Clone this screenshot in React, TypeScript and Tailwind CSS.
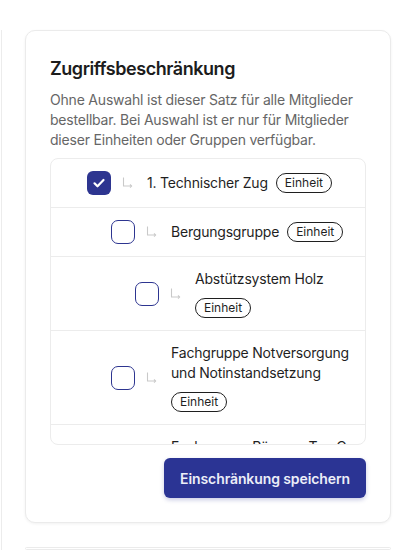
import React from "react";

type Item = { label: string; level: number; checked?: boolean };

const items: Item[] = [
  { label: "1. Technischer Zug", level: 0, checked: true },
  { label: "Bergungsgruppe", level: 1 },
  { label: "Abstützsystem Holz", level: 2 },
  { label: "Fachgruppe Notversorgung und Notinstandsetzung", level: 1 },
  { label: "Fachgruppe Räumen Typ C", level: 1 },
];

function Arrow() {
  return (
    <svg width="16" height="16" viewBox="0 0 16 16" fill="none" className="shrink-0">
      <path d="M4.5 2.5v8.5h8" stroke="#c9c9c9" strokeWidth="1.1" />
      <path d="M11 9.5l1.6 1.5-1.6 1.5" stroke="#c9c9c9" strokeWidth="1.1" />
    </svg>
  );
}

function Checkbox({ checked }: { checked?: boolean }) {
  if (checked) {
    return (
      <div className="w-6 h-6 shrink-0 rounded-[6px] bg-[#2d3590] flex items-center justify-center">
        <svg width="14" height="14" viewBox="0 0 14 14" fill="none">
          <path d="M2.5 7.3l3 3 6-6.3" stroke="#ffffff" strokeWidth="2.2" strokeLinecap="round" strokeLinejoin="round" />
        </svg>
      </div>
    );
  }
  return <div className="w-6 h-6 shrink-0 rounded-[7px] border-[1.5px] border-[#2d3590] bg-white" />;
}

function Row({ item }: { item: Item }) {
  const pad = item.level === 0 ? "pl-9" : item.level === 1 ? "pl-[60px]" : "pl-[84px]";
  return (
    <div className={`flex items-center border-b border-[#ececec] py-3 pr-4 ${pad}`}>
      <Checkbox checked={item.checked} />
      <div className="ml-2 mr-3">
        <Arrow />
      </div>
      <div className="flex flex-wrap items-center gap-x-2 gap-y-[9px] min-w-0">
        <span className="text-[14px] leading-5 tracking-[-0.2px] text-[#1f1f1f] min-w-0">{item.label}</span>
        <span className="text-[12px] leading-4 text-[#1f1f1f] border border-[#1f1f1f] rounded-full px-2 py-px">
          Einheit
        </span>
      </div>
    </div>
  );
}

export default function App() {
  return (
    <div
      className="w-[415px] h-[550px] overflow-hidden bg-white flex"
      style={{ fontFamily: "Inter, 'Noto Sans', sans-serif" }}
    >
      <div className="w-[2px] shrink-0 mt-[30px] border-r border-[#ececec]" />
      <div className="ml-[23px] w-[366px] shrink-0 pt-[30px] flex flex-col">
        <div className="rounded-[10px] border border-[#ebebeb] shadow-[0_1px_3px_rgba(0,0,0,0.06)] px-6 pt-6 pb-6 bg-white">
          <h2 className="text-[18px] leading-7 font-semibold tracking-[-0.45px] text-[#1c1c1c]">Zugriffsbeschränkung</h2>
          <p className="mt-[7px] text-[14px] leading-5 tracking-[-0.2px] text-[#666666]">
            Ohne Auswahl ist dieser Satz für alle Mitglieder bestellbar. Bei Auswahl ist er nur für Mitglieder
            dieser Einheiten oder Gruppen verfügbar.
          </p>
          <div className="mt-2 h-[287px] overflow-hidden rounded-lg border border-[#ececec]">
            {items.map((it) => (
              <Row key={it.label} item={it} />
            ))}
          </div>
          <div className="mt-[13px] flex justify-end">
            <button className="h-10 px-4 rounded-md bg-[#2b3494] text-[#eceef8] text-[14px] tracking-[-0.1px] font-semibold shadow-[0_2px_4px_rgba(43,52,148,0.25)]">
              Einschränkung speichern
            </button>
          </div>
        </div>
        <div className="mt-[24px] h-[40px] rounded-[10px] border border-[#ebebeb] bg-white" />
      </div>
    </div>
  );
}
